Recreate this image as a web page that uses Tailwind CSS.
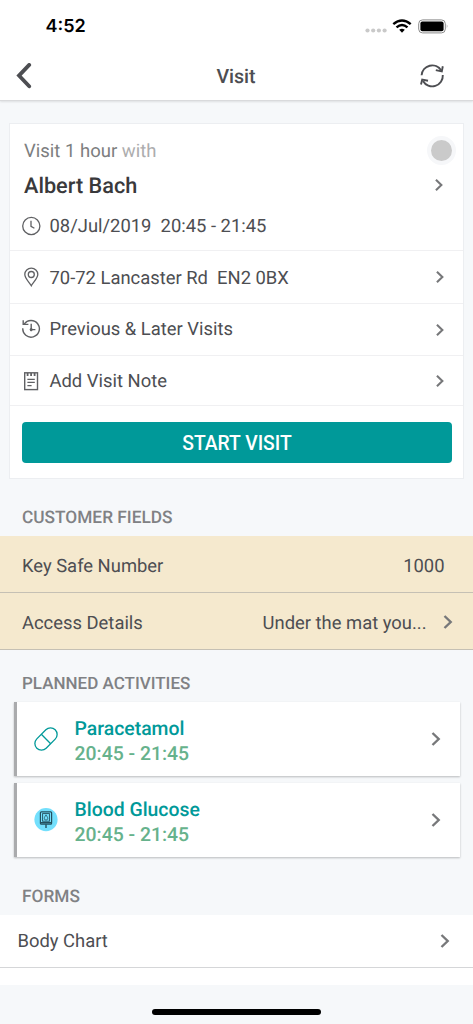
<!DOCTYPE html>
<html lang="en">
<head>
<meta charset="utf-8">
<title>Visit</title>
<script src="https://cdn.jsdelivr.net/npm/@tailwindcss/browser@4"></script>
</head>
<body class="bg-[#f6f8fa]">
<svg class="hidden">
  <symbol id="chev" viewBox="0 0 10 16"><path d="M1.5 2 L7.7 8 L1.5 14" fill="none" stroke="#77787a" stroke-width="2.4"/></symbol>
</svg>
<div class="flex h-[1024px] w-[473px] flex-col overflow-hidden bg-[#f6f8fa] font-[Roboto,sans-serif] text-[18.4px] leading-6 text-[#4d4e52] [text-rendering:geometricPrecision]">
  <header class="relative flex h-[101px] flex-none flex-col border-b border-[#d9dadc] bg-white shadow-[0_1px_2px_rgba(0,0,0,0.1)]">
    <div class="flex h-[52px] items-center justify-between pr-[24px] pl-[45.5px]">
      <span class="pt-[2px] font-[Inter,sans-serif] text-[18px] font-semibold text-black">4:52</span>
      <div class="flex items-center">
        <svg class="mt-[9px] h-[5px] w-[22px]" viewBox="0 0 22 5" fill="#c9c9c9"><circle cx="2.5" cy="2.5" r="2.1"/><circle cx="8.2" cy="2.5" r="2.1"/><circle cx="13.9" cy="2.5" r="2.1"/><circle cx="19.6" cy="2.5" r="2.1"/></svg>
        <svg class="ml-[5px] h-[14px] w-[20px]" viewBox="0 0 20 14" fill="none" stroke="#000" stroke-width="2.4"><path d="M1.3 5.2 Q10 -2.4 18.7 5.2"/><path d="M4.5 8.4 Q10 3.5 15.5 8.4"/><path d="M7.2 10.8 Q10 8.6 12.8 10.8 L10 13.7 Z" fill="#000" stroke="none"/></svg>
        <svg class="ml-[6px] h-[15px] w-[31px]" viewBox="0 0 31 15"><rect x=".7" y=".9" width="26.6" height="13" rx="3.8" fill="none" stroke="#8b8b8b"/><rect x="2.4" y="2.6" width="23.2" height="9.6" rx="2" fill="#000"/><path d="M28.8 5.3 Q30.4 7.4 28.8 9.5Z" fill="#8b8b8b"/></svg>
      </div>
    </div>
    <div class="grid h-[48px] grid-cols-3 items-center pr-[28px] pl-[16px]">
      <svg class="h-[26px] w-[16px]" viewBox="0 0 16 26"><path d="M13.2 1.9 L3 12.6 L13.2 23.3" fill="none" stroke="#4d4e52" stroke-width="3.8" stroke-linecap="round"/></svg>
      <h1 class="pt-[1px] pl-[11px] text-center text-[19.6px] font-medium">Visit</h1>
      <svg class="h-[26px] w-[26px] justify-self-end" viewBox="0 0 26 26" fill="none" stroke="#4d4e52" stroke-width="1.9"><path d="M2.6 12.3 A10.6 10.6 0 0 1 22.2 7.5"/><path d="M23.8 12 A10.6 10.6 0 0 1 4 18"/><path d="M23.8 3.3 L22.8 8.4 L16.8 7.1"/><path d="M2 21.5 L3.2 16.6 L9 17.8"/></svg>
    </div>
  </header>

  <section class="mt-[22px] ml-[9px] h-[356px] w-[455px] flex-none border border-[#eceef1] bg-white">
    <div class="flex h-[126px] flex-col">
      <div class="mt-[12px] flex h-[28px] items-center justify-between pr-[7px] pl-[14px] text-[18.5px] text-[#7d7e80]">
        <span class="pt-[2px]">Visit 1 hour <span class="text-[#adadae]">with</span></span>
        <span class="h-[29px] w-[29px] rounded-full border-[4px] border-[#f6f7f9] bg-[#cacaca]"></span>
      </div>
      <div class="mt-[7px] flex h-[28px] items-center justify-between pr-[19px] pl-[14px] text-[21.7px] font-medium text-[#39393b]">
        <span class="pt-[3px]">Albert Bach</span><svg class="h-[14px] w-[10px]"><use href="#chev"/></svg>
      </div>
      <div class="mt-[15px] flex items-center gap-[7.5px] pl-[12px]">
        <svg class="-mt-[2px] h-[20px] w-[20px]" viewBox="0 0 20 20" fill="none" stroke="#606164" stroke-width="1.3"><circle cx="9.3" cy="10" r="8.6"/><path d="M9 4.8 V10.4 L12.4 12.2"/></svg>
        <span class="pt-[1px] whitespace-pre">08/Jul/2019  20:45 - 21:45</span>
      </div>
    </div>
    <div class="flex h-[53px] items-center border-t border-[#f0f0f2] pr-[18px] pl-[12px]">
      <svg class="mr-[7.5px] h-[20px] w-[20px]" viewBox="0 0 20 20" fill="none" stroke="#606164" stroke-width="1.3"><path d="M9.3 18.8 C7.5 15.5 2.8 11.5 2.8 7.3 A6.5 6.2 0 0 1 15.8 7.3 C15.8 11.5 11 15.5 9.3 18.8Z"/><circle cx="9.3" cy="7.5" r="3"/></svg>
      <span class="grow pt-[3px] whitespace-pre">70-72 Lancaster Rd  EN2 0BX</span><svg class="h-[14px] w-[10px]"><use href="#chev"/></svg>
    </div>
    <div class="flex h-[52px] items-center border-t border-[#f0f0f2] pr-[18px] pl-[12px]">
      <svg class="-mt-[2px] mr-[7.5px] h-[20px] w-[20px]" viewBox="0 0 20 20" fill="none" stroke="#606164" stroke-width="1.4"><path d="M2.2 5.2 A8.3 8.3 0 1 1 .8 9.2"/><path d="M1.2 1.2 V5.4 H6.4"/><path d="M9.2 4.8 V12.2 M8 10.6 H13.4"/><circle cx="9.2" cy="10.6" r="1.5" fill="#606164" stroke="none"/></svg>
      <span class="grow pt-[1px]">Previous &amp; Later Visits</span><svg class="h-[14px] w-[10px]"><use href="#chev"/></svg>
    </div>
    <div class="flex h-[50px] items-center border-t border-[#f0f0f2] pr-[18px] pl-[12px]">
      <svg class="mr-[7.5px] h-[20px] w-[20px]" viewBox="0 0 20 20" fill="none" stroke="#606164" stroke-width="1.4"><rect x="2.7" y="1.8" width="12.8" height="16.8"/><path d="M5.6 2 V5 M9.1 2 V5 M12.6 2 V5" stroke-width="1.8"/><path d="M5.4 8.4 H12.8 M5.4 11.4 H12.8 M5.4 14.6 H9.6"/></svg>
      <span class="grow pt-[3px]">Add Visit Note</span><svg class="h-[14px] w-[10px]"><use href="#chev"/></svg>
    </div>
    <div class="border-t border-[#f0f0f2] pt-[16px] pl-[12px]">
      <button class="block h-[41px] w-[430px] rounded-[4px] bg-[#009999] pt-[2px] text-[19.3px] font-medium text-white">START VISIT</button>
    </div>
  </section>

  <h2 class="mt-[26px] h-[31px] flex-none pt-[1px] pl-[22px] text-[17.3px] font-medium text-[#808184]">CUSTOMER FIELDS</h2>
  <div class="flex h-[57px] flex-none items-center justify-between border-b border-[#c5c0b4] bg-[#f5e9ce] pt-[5px] pr-[28.5px] pl-[22px]">
    <span>Key Safe Number</span><span>1000</span>
  </div>
  <div class="flex h-[57px] flex-none items-center border-b border-[#c5c0b4] bg-[#f5e9ce] pt-[5px] pr-[19px] pl-[22px]">
    <span class="grow">Access Details</span><span>Under the mat you...</span>
    <svg class="-mt-[4px] ml-[15.5px] h-[16px] w-[12px]"><use href="#chev"/></svg>
  </div>

  <h2 class="mt-[21px] h-[31px] flex-none pt-[1px] pl-[22px] text-[17px] font-medium text-[#808184]">PLANNED ACTIVITIES</h2>
  <div class="ml-[14px] flex h-[74px] w-[446px] flex-none items-center border-l-[3px] border-[#aaabad] bg-white pr-[18px] pl-[17px] shadow-[0_1px_2px_rgba(0,0,0,0.25)]">
    <svg class="h-[24px] w-[24px]" viewBox="0 0 24 24" fill="none" stroke="#009999" stroke-width="1.3"><g transform="rotate(-45 12 12)"><rect x="-1" y="5.4" width="26" height="13.2" rx="6.6"/><path d="M12 5.4 V18.6"/></g></svg>
    <div class="ml-[16.5px] grow pt-[4px] text-[19.4px] leading-[25px] font-medium text-[#009999]">
      <div>Paracetamol</div><div class="text-[#66b28c]">20:45 - 21:45</div>
    </div>
    <svg class="h-[16px] w-[12px]"><use href="#chev"/></svg>
  </div>
  <div class="mt-[7px] ml-[14px] flex h-[74px] w-[446px] flex-none items-center border-l-[3px] border-[#aaabad] bg-white pr-[18px] pl-[17px] shadow-[0_1px_2px_rgba(0,0,0,0.25)]">
    <svg class="h-[24px] w-[24px]" viewBox="0 0 24 24" fill="none" stroke="#24505e" stroke-width="1.2"><circle cx="12" cy="11.6" r="11.6" fill="#73dffc" stroke="none"/><rect x="6.4" y="3.8" width="11.2" height="12.4" rx="1"/><rect x="8.6" y="5.6" width="6.8" height="7.6" stroke-width=".9"/><path d="M12 6.8 C11 8.6 10.3 9.2 10.3 10.4 A1.7 1.7 0 0 0 13.7 10.4 C13.7 9.2 13 8.6 12 6.8Z" stroke-width=".8"/><path d="M7 14.8 H17 M12 16.2 V19.9" stroke-width="1.4"/></svg>
    <div class="ml-[16.5px] grow pt-[4px] text-[19.4px] leading-[25px] font-medium text-[#009999]">
      <div>Blood Glucose</div><div class="text-[#66b28c]">20:45 - 21:45</div>
    </div>
    <svg class="-mt-[1px] h-[16px] w-[12px]"><use href="#chev"/></svg>
  </div>

  <h2 class="mt-[27px] h-[31px] flex-none pt-[1px] pl-[22px] text-[17.3px] font-medium text-[#808184]">FORMS</h2>
  <div class="flex h-[53px] flex-none items-center justify-between border-b border-[#d5d6d8] bg-white pr-[22px] pl-[17.5px]">
    <span class="pt-[1px]">Body Chart</span><svg class="h-[16px] w-[12px]"><use href="#chev"/></svg>
  </div>
  <div class="h-[17px] flex-none bg-white"></div>
  <div class="mt-[24px] ml-[152px] h-[6px] w-[169px] flex-none rounded-full bg-black"></div>
</div>
</body>
</html>
